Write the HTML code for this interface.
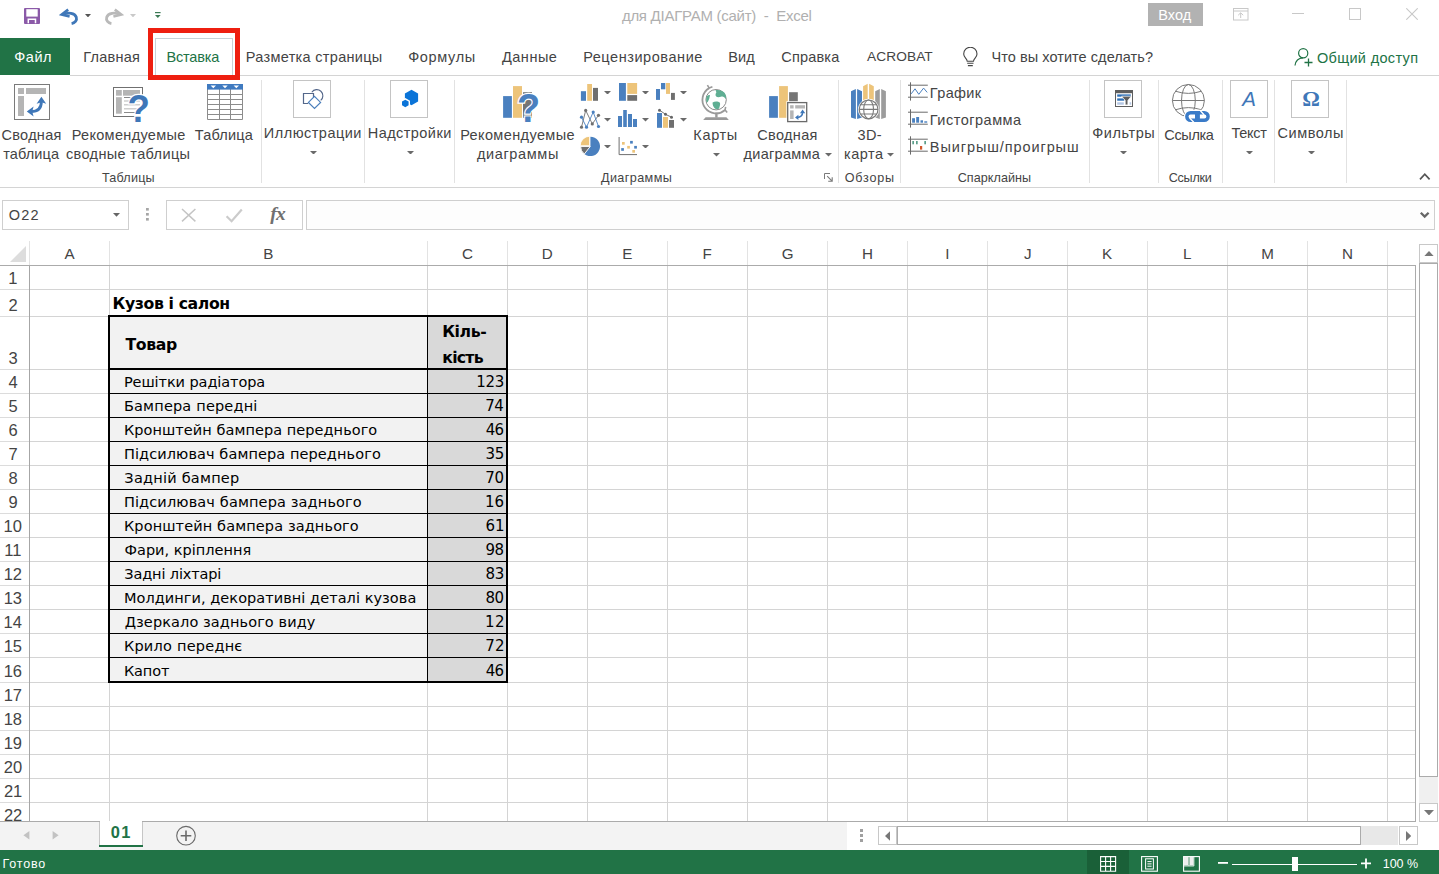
<!DOCTYPE html>
<html lang="ru"><head><meta charset="utf-8"><title>Excel</title>
<style>
html,body{margin:0;padding:0;background:#fff;}
body{width:1439px;height:874px;position:relative;overflow:hidden;font-family:"Liberation Sans",sans-serif;}
.a{position:absolute;display:block;}
.t{position:absolute;white-space:pre;line-height:20px;height:20px;}
</style></head><body>
<svg class="a" style="left:24px;top:8px;" width="16" height="16" viewBox="0 0 16 16"><rect x="0" y="0" width="16" height="16" rx="1" fill="#8b5aa8"/><rect x="2.3" y="1.2" width="11.4" height="7.4" fill="#fff"/><path d="M4.3 15.3V11.3H11.5V15.3" fill="none" stroke="#fff" stroke-width="1.5"/></svg>
<svg class="a" style="left:59px;top:7px;" width="21" height="18" viewBox="0 0 21 18"><path d="M9.2 2.6L2.6 7.6L10.6 9.6" fill="none" stroke="#3f77b8" stroke-width="2.6" stroke-linejoin="miter"/><path d="M4.2 7.5C9 5.2 15.8 5.6 17.3 10.2C18.3 13.4 15.8 16 12.6 16.6" fill="none" stroke="#3f77b8" stroke-width="2.8"/></svg>
<svg class="a" style="left:85px;top:14px;" width="6" height="3.4" viewBox="0 0 6 3.4"><path d="M0 0H6L3 3.4Z" fill="#555"/></svg>
<svg class="a" style="left:103px;top:7px;" width="21" height="18" viewBox="0 0 21 18"><g transform="translate(21,0) scale(-1,1)"><path d="M9.2 2.6L2.6 7.6L10.6 9.6" fill="none" stroke="#b9b9b9" stroke-width="2.6"/><path d="M4.2 7.5C9 5.2 15.8 5.6 17.3 10.2C18.3 13.4 15.8 16 12.6 16.6" fill="none" stroke="#b9b9b9" stroke-width="2.8"/></g></svg>
<svg class="a" style="left:130px;top:14px;" width="6" height="3.4" viewBox="0 0 6 3.4"><path d="M0 0H6L3 3.4Z" fill="#c9c9c9"/></svg>
<svg class="a" style="left:155px;top:12px;" width="6" height="6" viewBox="0 0 6 6"><rect x="0" y="0" width="5.6" height="1.2" fill="#3c7a55"/><path d="M0 3H5.6L2.8 5.9Z" fill="#3c7a55"/></svg>
<svg class="a" style="left:1233px;top:8px;" width="16" height="13" viewBox="0 0 16 13"><rect x="0.5" y="0.5" width="14.5" height="11.5" fill="none" stroke="#c8c8c8"/><path d="M0.5 3H15M7.7 10V5M5.2 7.2L7.7 4.8L10.2 7.2" fill="none" stroke="#c8c8c8"/></svg>
<svg class="a" style="left:1292px;top:13px;" width="12" height="1" viewBox="0 0 12 1"><rect width="12" height="1" fill="#c8c8c8"/></svg>
<svg class="a" style="left:1349px;top:8px;" width="12" height="12" viewBox="0 0 12 12"><rect x="0.5" y="0.5" width="11" height="11" fill="none" stroke="#c8c8c8"/></svg>
<svg class="a" style="left:1406px;top:8px;" width="12" height="12" viewBox="0 0 12 12"><path d="M0.3 0.3L11.7 11.7M11.7 0.3L0.3 11.7" stroke="#c8c8c8" stroke-width="1.1"/></svg>
<svg class="a" style="left:962px;top:47px;" width="17" height="21" viewBox="0 0 17 21"><path d="M5.2 14.2C5 11.5 1.7 10.3 1.7 6.9A6.6 6.6 0 0 1 15 6.9C15 10.3 11.7 11.5 11.5 14.2Z" fill="none" stroke="#444" stroke-width="1.1"/><path d="M5.2 16.3H11.5M5.9 18.6H10.8" stroke="#444" stroke-width="1.1"/></svg>
<svg class="a" style="left:1294px;top:47px;" width="20" height="20" viewBox="0 0 20 20"><circle cx="9.2" cy="6.2" r="4.6" fill="none" stroke="#217346" stroke-width="1.2"/><path d="M1 18.5C1.6 13.5 4.6 11 9 10.8" fill="none" stroke="#217346" stroke-width="1.2"/><path d="M14.5 11.5V19.5M10.5 15.5H18.5" stroke="#217346" stroke-width="1.3"/></svg>
<span class="t" style="left:621.92px;top:5.80px;font-size:15px;letter-spacing:-0.272px;color:#b0b0b0;">для ДІАГРАМ (сайт)  -  Excel</span>
<div class="a" style="left:1148px;top:3px;width:55px;height:23px;background:#b2b2b2;"></div>
<span class="t" style="left:1158.34px;top:4.98px;font-size:14.5px;letter-spacing:0.012px;color:#ffffff;">Вход</span>
<div class="a" style="left:0px;top:38px;width:70px;height:37px;background:#217346;"></div>
<div class="a" style="left:70px;top:75px;width:1369px;height:1px;background:#d4d4d4;"></div>
<div class="a" style="left:68px;top:75px;width:0px;height:0px;"></div>
<div class="a" style="left:155px;top:38px;width:78px;height:38px;background:#ffffff;border:1px solid #c9d2d6;border-bottom:none;box-sizing:border-box;"></div>
<span class="t" style="left:14.20px;top:46.58px;font-size:14.5px;letter-spacing:0.581px;color:#ffffff;">Файл</span>
<span class="t" style="left:83.34px;top:46.58px;font-size:14.5px;letter-spacing:0.238px;color:#444444;">Главная</span>
<span class="t" style="left:166.44px;top:46.58px;font-size:14.5px;letter-spacing:-0.180px;color:#217346;">Вставка</span>
<span class="t" style="left:245.84px;top:46.58px;font-size:14.5px;letter-spacing:0.305px;color:#444444;">Разметка страницы</span>
<span class="t" style="left:408.20px;top:46.58px;font-size:14.5px;letter-spacing:0.661px;color:#444444;">Формулы</span>
<span class="t" style="left:501.93px;top:46.58px;font-size:14.5px;letter-spacing:0.521px;color:#444444;">Данные</span>
<span class="t" style="left:583.14px;top:46.58px;font-size:14.5px;letter-spacing:0.562px;color:#444444;">Рецензирование</span>
<span class="t" style="left:728.34px;top:46.58px;font-size:14.5px;letter-spacing:0.066px;color:#444444;">Вид</span>
<span class="t" style="left:781.27px;top:46.58px;font-size:14.5px;letter-spacing:0.185px;color:#444444;">Справка</span>
<span class="t" style="left:867.00px;top:46.85px;font-size:13.7px;letter-spacing:0.094px;color:#444444;">ACROBAT</span>
<span class="t" style="left:991.41px;top:46.58px;font-size:14.5px;letter-spacing:0.062px;color:#444444;">Что вы хотите сделать?</span>
<span class="t" style="left:1316.95px;top:48.28px;font-size:14.5px;letter-spacing:0.330px;color:#217346;">Общий доступ</span>
<div class="a" style="left:148px;top:28px;width:92px;height:52px;border:5px solid #ee1f10;box-sizing:border-box;"></div>
<div class="a" style="left:0px;top:187px;width:1439px;height:1px;background:#d4d4d4;"></div>
<div class="a" style="left:261px;top:80px;width:1px;height:103px;background:#e2e2e2;"></div>
<div class="a" style="left:364px;top:80px;width:1px;height:103px;background:#e2e2e2;"></div>
<div class="a" style="left:454px;top:80px;width:1px;height:103px;background:#e2e2e2;"></div>
<div class="a" style="left:838px;top:80px;width:1px;height:103px;background:#e2e2e2;"></div>
<div class="a" style="left:900px;top:80px;width:1px;height:103px;background:#e2e2e2;"></div>
<div class="a" style="left:1089px;top:80px;width:1px;height:103px;background:#e2e2e2;"></div>
<div class="a" style="left:1158px;top:80px;width:1px;height:103px;background:#e2e2e2;"></div>
<div class="a" style="left:1222px;top:80px;width:1px;height:103px;background:#e2e2e2;"></div>
<div class="a" style="left:1274px;top:80px;width:1px;height:103px;background:#e2e2e2;"></div>
<div class="a" style="left:1346px;top:80px;width:1px;height:103px;background:#e2e2e2;"></div>
<span class="t" style="left:1.57px;top:124.58px;font-size:14.5px;letter-spacing:0.270px;color:#444;">Сводная</span>
<span class="t" style="left:3.18px;top:144.28px;font-size:14.5px;letter-spacing:0.108px;color:#444;">таблица</span>
<span class="t" style="left:71.64px;top:124.58px;font-size:14.5px;letter-spacing:0.331px;color:#444;">Рекомендуемые</span>
<span class="t" style="left:66.02px;top:144.28px;font-size:14.5px;letter-spacing:0.354px;color:#444;">сводные таблицы</span>
<span class="t" style="left:194.71px;top:124.58px;font-size:14.5px;letter-spacing:0.230px;color:#444;">Таблица</span>
<span class="t" style="left:263.84px;top:123.18px;font-size:14.5px;letter-spacing:0.487px;color:#444;">Иллюстрации</span>
<span class="t" style="left:367.84px;top:123.18px;font-size:14.5px;letter-spacing:0.430px;color:#444;">Надстройки</span>
<span class="t" style="left:460.14px;top:124.58px;font-size:14.5px;letter-spacing:0.390px;color:#444;">Рекомендуемые</span>
<span class="t" style="left:476.93px;top:144.28px;font-size:14.5px;letter-spacing:0.622px;color:#444;">диаграммы</span>
<span class="t" style="left:693.34px;top:124.58px;font-size:14.5px;letter-spacing:0.662px;color:#444;">Карты</span>
<span class="t" style="left:757.27px;top:124.58px;font-size:14.5px;letter-spacing:0.337px;color:#444;">Сводная</span>
<span class="t" style="left:743.53px;top:144.28px;font-size:14.5px;letter-spacing:0.297px;color:#444;">диаграмма</span>
<span class="t" style="left:857.49px;top:124.58px;font-size:14.5px;letter-spacing:0.371px;color:#444;">3D-</span>
<span class="t" style="left:844.06px;top:144.28px;font-size:14.5px;letter-spacing:0.474px;color:#444;">карта</span>
<span class="t" style="left:929.84px;top:82.78px;font-size:14.5px;letter-spacing:0.359px;color:#444;">График</span>
<span class="t" style="left:929.84px;top:109.68px;font-size:14.5px;letter-spacing:0.494px;color:#444;">Гистограмма</span>
<span class="t" style="left:929.84px;top:136.68px;font-size:14.5px;letter-spacing:0.909px;color:#444;">Выигрыш/проигрыш</span>
<span class="t" style="left:1092.20px;top:123.18px;font-size:14.5px;letter-spacing:0.575px;color:#444;">Фильтры</span>
<span class="t" style="left:1164.28px;top:124.58px;font-size:14.5px;letter-spacing:-0.335px;color:#444;">Ссылка</span>
<span class="t" style="left:1231.41px;top:123.18px;font-size:14.5px;letter-spacing:-0.233px;color:#444;">Текст</span>
<span class="t" style="left:1277.58px;top:123.18px;font-size:14.5px;letter-spacing:0.538px;color:#444;">Символы</span>
<span class="t" style="left:101.95px;top:167.83px;font-size:12.6px;letter-spacing:0.211px;color:#444;">Таблицы</span>
<span class="t" style="left:600.94px;top:167.83px;font-size:12.6px;letter-spacing:0.418px;color:#444;">Диаграммы</span>
<span class="t" style="left:844.73px;top:167.83px;font-size:12.6px;letter-spacing:0.793px;color:#444;">Обзоры</span>
<span class="t" style="left:957.67px;top:167.83px;font-size:12.6px;letter-spacing:0.055px;color:#444;">Спарклайны</span>
<span class="t" style="left:1168.67px;top:167.83px;font-size:12.6px;letter-spacing:-0.228px;color:#444;">Ссылки</span>
<div class="a" style="left:293px;top:80px;width:38px;height:38px;background:#fff;border:1px solid #c4c4c4;box-sizing:border-box;"></div>
<div class="a" style="left:390px;top:80px;width:38px;height:38px;background:#fff;border:1px solid #c4c4c4;box-sizing:border-box;"></div>
<div class="a" style="left:1104px;top:80px;width:38px;height:38px;background:#fff;border:1px solid #c4c4c4;box-sizing:border-box;"></div>
<div class="a" style="left:1230px;top:80px;width:38px;height:38px;background:#fff;border:1px solid #c4c4c4;box-sizing:border-box;"></div>
<div class="a" style="left:1291px;top:80px;width:38px;height:38px;background:#fff;border:1px solid #c4c4c4;box-sizing:border-box;"></div>
<svg class="a" style="left:14px;top:84px;" width="36" height="36" viewBox="0 0 36 36"><rect x="0.5" y="0.5" width="35" height="35" fill="#fff" stroke="#7a7a7a"/><rect x="4" y="4" width="6" height="6" fill="#b5b5b5"/><rect x="12" y="4" width="20" height="6" fill="#b5b5b5"/><rect x="4" y="12" width="6" height="20" fill="#b5b5b5"/><path d="M17 27.6C23.5 27.6 27.4 24.5 27.4 17.5" fill="none" stroke="#3f77b8" stroke-width="2.8"/><path d="M12.8 27.6L19.6 22.6L18.2 27.6L19.6 32.4Z" fill="#3f77b8"/><path d="M27.4 12.8L32.2 19.8L27.4 18.2L22.6 19.8Z" fill="#3f77b8"/></svg>
<svg class="a" style="left:113px;top:87px;" width="36" height="36" viewBox="0 0 36 36"><rect x="0.5" y="0.5" width="29" height="29" fill="#fff" stroke="#707070"/><rect x="3" y="3" width="5.8" height="5.7" fill="#b5b5b5"/><rect x="10" y="3" width="17" height="5.7" fill="#b5b5b5"/><rect x="3" y="10.2" width="5.8" height="16.5" fill="#b5b5b5"/><path d="M11 10.5H27M11 25.5H27" stroke="#8a8a8a" stroke-width="1"/><path d="M11 14H27M11 17.8H27M11 21.8H27" stroke="#cfcfcf" stroke-width="1.6"/><rect x="27" y="11.5" width="4" height="19.5" fill="#fff"/><rect x="23.5" y="27" width="7" height="4" fill="#fff"/><text x="14.4" y="35" font-family="Liberation Sans,sans-serif" font-weight="700" font-size="39.4" fill="#3f77b8" stroke="#fff" stroke-width="2.4" paint-order="stroke" transform="translate(14.4 0) scale(0.93 1) translate(-14.4 0)">?</text></svg>
<svg class="a" style="left:207px;top:84px;" width="36" height="36" viewBox="0 0 36 36"><rect x="0" y="0" width="36" height="36" fill="#fff"/><path d="M0.5 5V35.5H35.5V5M12.5 5V35.5M23.5 5V35.5M0 10.5H36M0 15.5H36M0 20.5H36M0 25.5H36M0 30.5H36" fill="none" stroke="#8c8c8c"/><rect x="0" y="0" width="36" height="5.6" fill="#3f7ac0"/><path d="M3.6 1.4H9L6.3 4.2ZM15.3 1.4H20.7L18 4.2ZM26.6 1.4H32L29.3 4.2Z" fill="#fff"/></svg>
<svg class="a" style="left:293px;top:80px;" width="38" height="38" viewBox="0 0 38 38"><path d="M15.2 23.5H10.5V13.5H20.5V17" fill="none" stroke="#54678a" stroke-width="1.2"/><path d="M18.8 12.2A6.1 6.1 0 1 1 27.7 20.4" fill="none" stroke="#54678a" stroke-width="1.1"/><path d="M21.5 16.3L27.6 22.4L21.5 28.5L15.4 22.4Z" fill="#fff" stroke="#4a7ebb" stroke-width="1.2"/></svg>
<svg class="a" style="left:390px;top:80px;" width="38" height="38" viewBox="0 0 38 38"><path d="M21.5 9.8L28.1 13.6V21.4L21.5 25.2L14.9 21.4V13.6Z" fill="#0b74d8"/><path d="M15.3 18L20 20.7V26.1L15.3 28.8L10.6 26.1V20.7Z" fill="#fff"/><path d="M15.3 19.7L18.6 21.6V25.3L15.3 27.2L12 25.3V21.6Z" fill="#0b74d8"/></svg>
<svg class="a" style="left:500px;top:84px;" width="42" height="42" viewBox="0 0 42 42"><rect x="3.1" y="12.1" width="8.8" height="21.7" fill="#4a80bf"/><rect x="13" y="2.1" width="9" height="31.7" fill="#edc47a"/><rect x="23" y="8.2" width="9" height="25.6" fill="#757575"/><text x="17" y="38" font-family="Liberation Sans,sans-serif" font-weight="700" font-size="39.8" fill="#4a80bf" stroke="#fff" stroke-width="2.4" paint-order="stroke" transform="translate(17 0) scale(0.95 1) translate(-17 0)">?</text></svg>
<svg class="a" style="left:578px;top:82px;" width="24" height="22" viewBox="0 0 24 22"><rect x="2.9" y="9.2" width="5.1" height="9.6" fill="#4a80bf"/><rect x="9.2" y="2.0" width="4.8" height="16.8" fill="#edc47a"/><rect x="15.0" y="5.9" width="5.0" height="12.9" fill="#6f6f6f"/></svg>
<svg class="a" style="left:617px;top:82px;" width="24" height="22" viewBox="0 0 24 22"><rect x="2.0" y="1.0" width="6.9" height="17.8" fill="#4a80bf"/><rect x="10.3" y="1.0" width="9.8" height="10.9" fill="#edc47a"/><rect x="10.3" y="13.1" width="9.8" height="5.7" fill="#6f6f6f"/></svg>
<svg class="a" style="left:654px;top:82px;" width="24" height="22" viewBox="0 0 24 22"><rect x="2.0" y="7.0" width="4.0" height="10.9" fill="#4a80bf"/><rect x="7.0" y="1.0" width="4.3" height="6.3" fill="#4a80bf"/><rect x="12.0" y="1.0" width="4.0" height="10.9" fill="#edc47a"/><rect x="17.0" y="10.9" width="3.9" height="7.0" fill="#6f6f6f"/></svg>
<svg class="a" style="left:578px;top:107px;" width="24" height="23" viewBox="0 0 24 23"><polyline points="3.5,20.2 7.7,3.4 14.3,16.9 20.5,8.3" fill="none" stroke="#6f6f6f" stroke-width="0.9"/><polyline points="3.5,10.2 8.5,20.2 15.2,5.1 20.5,19.5" fill="none" stroke="#4a80bf" stroke-width="0.9"/><circle cx="3.5" cy="20.2" r="1.6" fill="#6f6f6f"/><circle cx="7.7" cy="3.4" r="1.6" fill="#6f6f6f"/><circle cx="14.3" cy="16.9" r="1.6" fill="#6f6f6f"/><circle cx="20.5" cy="8.3" r="1.6" fill="#6f6f6f"/><circle cx="3.5" cy="10.2" r="1.6" fill="#4a80bf"/><circle cx="8.5" cy="20.2" r="1.6" fill="#4a80bf"/><circle cx="15.2" cy="5.1" r="1.6" fill="#4a80bf"/><circle cx="20.5" cy="19.5" r="1.6" fill="#4a80bf"/></svg>
<svg class="a" style="left:617px;top:107px;" width="24" height="23" viewBox="0 0 24 23"><rect x="1.0" y="9.0" width="4.0" height="11.0" fill="#4a80bf"/><rect x="6.2" y="3.0" width="3.6" height="17.0" fill="#4a80bf"/><rect x="11.0" y="7.0" width="4.0" height="13.0" fill="#4a80bf"/><rect x="16.0" y="12.0" width="4.0" height="8.0" fill="#4a80bf"/></svg>
<svg class="a" style="left:654px;top:107px;" width="24" height="23" viewBox="0 0 24 23"><rect x="3.0" y="6.0" width="5.0" height="14.8" fill="#4a80bf"/><rect x="9.0" y="10.0" width="5.0" height="10.8" fill="#edc47a"/><rect x="15.0" y="13.0" width="5.0" height="7.8" fill="#6f6f6f"/><polyline points="5.5,3.2 11.5,7.3 17.5,10.2" fill="none" stroke="#666" stroke-width="0.9"/><circle cx="5.5" cy="3.2" r="1.5" fill="#666"/><circle cx="11.5" cy="7.3" r="1.5" fill="#666"/><circle cx="17.5" cy="10.2" r="1.5" fill="#666"/></svg>
<svg class="a" style="left:578px;top:134px;" width="24" height="24" viewBox="0 0 24 24"><path d="M12.3 12.4L12.30 2.70A9.7 9.7 0 1 1 6.33 20.04Z" fill="#4a80bf"/><path d="M12.3 12.4L6.33 20.04A9.7 9.7 0 0 1 2.60 12.40Z" fill="#6f6f6f" stroke="#fff" stroke-width="0.9"/><path d="M11.700000000000001 11.8L2.100000000000002 11.8A9.7 9.7 0 0 1 11.700000000000001 2.2000000000000015Z" fill="#edc47a" stroke="#fff" stroke-width="0.9"/></svg>
<svg class="a" style="left:617px;top:135px;" width="24" height="22" viewBox="0 0 24 22"><path d="M2.1 2V19.6H20" fill="none" stroke="#6f6f6f" stroke-width="1"/><rect x="5.0" y="7.0" width="2.7" height="2.7" fill="#edc47a"/><rect x="13.1" y="5.9" width="2.7" height="2.7" fill="#4a80bf"/><rect x="10.2" y="10.9" width="2.7" height="2.7" fill="#edc47a"/><rect x="17.2" y="10.9" width="2.7" height="2.7" fill="#4a80bf"/><rect x="4.2" y="13.1" width="2.7" height="2.7" fill="#4a80bf"/><rect x="15.3" y="15.0" width="2.7" height="2.7" fill="#edc47a"/></svg>
<svg class="a" style="left:603.5px;top:90.9px;" width="7" height="3.6" viewBox="0 0 7 3.6"><path d="M0 0H7L3.5 3.6Z" fill="#6a6a6a"/></svg>
<svg class="a" style="left:641.5px;top:90.9px;" width="7" height="3.6" viewBox="0 0 7 3.6"><path d="M0 0H7L3.5 3.6Z" fill="#6a6a6a"/></svg>
<svg class="a" style="left:679.5px;top:90.9px;" width="7" height="3.6" viewBox="0 0 7 3.6"><path d="M0 0H7L3.5 3.6Z" fill="#6a6a6a"/></svg>
<svg class="a" style="left:603.5px;top:118.1px;" width="7" height="3.6" viewBox="0 0 7 3.6"><path d="M0 0H7L3.5 3.6Z" fill="#6a6a6a"/></svg>
<svg class="a" style="left:641.5px;top:118.1px;" width="7" height="3.6" viewBox="0 0 7 3.6"><path d="M0 0H7L3.5 3.6Z" fill="#6a6a6a"/></svg>
<svg class="a" style="left:679.5px;top:118.1px;" width="7" height="3.6" viewBox="0 0 7 3.6"><path d="M0 0H7L3.5 3.6Z" fill="#6a6a6a"/></svg>
<svg class="a" style="left:603.5px;top:144.9px;" width="7" height="3.6" viewBox="0 0 7 3.6"><path d="M0 0H7L3.5 3.6Z" fill="#6a6a6a"/></svg>
<svg class="a" style="left:641.5px;top:144.9px;" width="7" height="3.6" viewBox="0 0 7 3.6"><path d="M0 0H7L3.5 3.6Z" fill="#6a6a6a"/></svg>
<svg class="a" style="left:700px;top:82px;" width="32" height="40" viewBox="0 0 32 40"><circle cx="16.1" cy="17.7" r="10.2" fill="#fff" stroke="#8a8a8a" stroke-width="1"/><path d="M15.5 8.3C18 7.4 22 8 24.3 10.6C25.8 12.4 26.3 14.8 25.8 17C24.6 15.2 23.2 14.2 21.6 14.6C19.6 15.2 17.6 15.8 16.2 14.6C15 13.4 15.6 11.4 16.4 10.2Z" fill="#5fae93"/><path d="M6.8 14.2C8 13 9.6 12.6 10 13.4C9.6 15.6 9 17.6 8 19.4C7.4 20.4 6.6 20.6 6.3 19.6C6 17.8 6.2 15.8 6.8 14.2Z" fill="#5fae93"/><path d="M12.6 20.4C14.8 19 18.4 19.2 19.8 20.6C20.6 22 19.8 24 19.4 25.6C19.2 26.8 18.2 27.4 16.8 27.2C14.2 26.6 12.4 23.6 12.6 20.4Z" fill="#5fae93"/><path d="M9.2 6.1A13.6 13.6 0 1 0 25.1 28" fill="none" stroke="#9a9a9a" stroke-width="1.8"/><path d="M7.4 3.2L9.2 6.1L12.4 4.8M25.6 24.8L25.1 28L27.2 30.6" fill="none" stroke="#9a9a9a" stroke-width="1.6"/><rect x="15.2" y="30.6" width="2.4" height="5" fill="#9a9a9a"/><path d="M5.6 35.2H26.4L28.8 37.9H3.2Z" fill="#9a9a9a"/></svg>
<svg class="a" style="left:712.5px;top:153.0px;" width="7" height="3.6" viewBox="0 0 7 3.6"><path d="M0 0H7L3.5 3.6Z" fill="#6a6a6a"/></svg>
<svg class="a" style="left:766px;top:84px;" width="44" height="40" viewBox="0 0 44 40"><rect x="3.1" y="12.1" width="8.8" height="21.7" fill="#4a80bf"/><rect x="13.1" y="2.1" width="8.8" height="31.7" fill="#edc47a"/><rect x="23.1" y="8.2" width="8.7" height="12" fill="#757575"/><rect x="20.4" y="17.2" width="21.4" height="21.4" fill="#fff"/><rect x="21.7" y="18.6" width="19" height="19" fill="#fff" stroke="#6a6a6a" stroke-width="1.3"/><rect x="24.1" y="21.2" width="3.5" height="3.3" fill="#b5b5b5"/><rect x="29.2" y="21.2" width="9.8" height="3.3" fill="#b5b5b5"/><rect x="24.1" y="26.4" width="3.5" height="8.6" fill="#b5b5b5"/><path d="M31 33.4C34.6 33.4 36.6 31.6 36.6 28" fill="none" stroke="#3f77b8" stroke-width="1.5"/><path d="M29 33.4L32.4 30.8V36ZM36.6 25.6L39.2 29.2H34Z" fill="#3f77b8"/></svg>
<svg class="a" style="left:824.5px;top:153.0px;" width="7" height="3.6" viewBox="0 0 7 3.6"><path d="M0 0H7L3.5 3.6Z" fill="#6a6a6a"/></svg>
<svg class="a" style="left:848px;top:82px;" width="42" height="40" viewBox="0 0 42 40"><path d="M3.0 9.2L7.9 7.0V36.9L3.0 35.6Z" fill="#4a80bf"/><path d="M9.1 7.0L14.0 9.2V35.6L9.1 36.9Z" fill="#4a80bf"/><path d="M15.1 4.2L19.7 1.8V28.0L15.1 28.0Z" fill="#edc47a"/><path d="M21.1 1.8L25.8 4.2V28.0L21.1 28.0Z" fill="#edc47a"/><path d="M27.2 9.2L31.8 7.0V36.9L27.2 35.6Z" fill="#9c9c9c"/><path d="M33.2 7.0L37.9 9.2V35.6L33.2 36.9Z" fill="#9c9c9c"/><circle cx="20.600000000000023" cy="27.400000000000006" r="10.6" fill="#fff"/><circle cx="20.600000000000023" cy="27.400000000000006" r="9.4" fill="#fff" stroke="#7a7a7a" stroke-width="1.2"/><ellipse cx="20.600000000000023" cy="27.400000000000006" rx="4.9" ry="9.4" fill="none" stroke="#7a7a7a" stroke-width="1.1"/><path d="M11.200000000000022 27.400000000000006H30.00000000000002M12.400000000000023 22.800000000000004H28.800000000000022M12.400000000000023 32.00000000000001H28.800000000000022" stroke="#7a7a7a" stroke-width="1.1"/></svg>
<svg class="a" style="left:886.5px;top:153.0px;" width="7" height="3.6" viewBox="0 0 7 3.6"><path d="M0 0H7L3.5 3.6Z" fill="#6a6a6a"/></svg>
<svg class="a" style="left:908px;top:82px;" width="20" height="19" viewBox="0 0 20 19"><path d="M2.5 0.3V18.6M0 3.2H19.8M0 15.2H19.8" fill="none" stroke="#6a6a6a" stroke-width="1"/><polyline points="3.1,11.9 7,6.8 10.8,12.3 15.6,6.1 19.2,10.4" fill="none" stroke="#4a80bf" stroke-width="1"/></svg>
<svg class="a" style="left:908px;top:109px;" width="20" height="19" viewBox="0 0 20 19"><path d="M2.5 0.3V18.6M0 3.2H19.8M0 15.2H19.8" fill="none" stroke="#6a6a6a" stroke-width="1"/><rect x="4.1" y="9.2" width="2.9" height="4.5" fill="#4a80bf"/><rect x="8.2" y="8" width="2.9" height="5.7" fill="#4a80bf"/><rect x="12.5" y="11.3" width="2.5" height="2.4" fill="#4a80bf"/><rect x="16.3" y="12.3" width="2.9" height="1.4" fill="#4a80bf"/></svg>
<svg class="a" style="left:908px;top:136px;" width="20" height="19" viewBox="0 0 20 19"><path d="M2.5 0.3V18.6M0 3.2H19.8M0 15.2H19.8" fill="none" stroke="#6a6a6a" stroke-width="1"/><rect x="4.3" y="5" width="1.7" height="3.3" fill="#5c9e8a"/><rect x="8" y="5" width="1.7" height="3.3" fill="#5c9e8a"/><rect x="16.3" y="5" width="1.7" height="3.3" fill="#5c9e8a"/><rect x="12" y="10" width="2.2" height="3.6" fill="#d2562a"/></svg>
<svg class="a" style="left:1104px;top:80px;" width="38" height="38" viewBox="0 0 38 38"><rect x="11.5" y="10.5" width="17" height="16" fill="#fff" stroke="#5e5e5e" stroke-width="1"/><rect x="11" y="10" width="18" height="3.2" fill="#5e5e5e"/><rect x="13.2" y="14.4" width="13.6" height="2.3" fill="#2e6fb6"/><rect x="13.2" y="18.4" width="7" height="2.3" fill="#2e6fb6"/><rect x="13.2" y="22.3" width="6.6" height="2.4" fill="#b4c7e4"/><rect x="25.6" y="22.3" width="1.6" height="2.4" fill="#b4c7e4"/><path d="M17.6 16.2H27.4L23.9 20.4V24.9H21.2V20.4Z" fill="#5e5e5e" stroke="#fff" stroke-width="0.7"/></svg>
<svg class="a" style="left:1162px;top:82px;" width="52" height="42" viewBox="0 0 52 42"><circle cx="26.4" cy="18.5" r="16" fill="#fff" stroke="#7a7a7a" stroke-width="1"/><ellipse cx="26.4" cy="18.5" rx="6.9" ry="16" fill="none" stroke="#7a7a7a" stroke-width="1"/><path d="M10.399999999999999 18.5H42.4M13.399999999999999 9.2Q26.4 13.6 39.4 9.2M13.399999999999999 27.8Q26.4 23.4 39.4 27.8" fill="none" stroke="#7a7a7a" stroke-width="1"/><rect x="23.1" y="29" width="24.7" height="11" rx="5.5" fill="#fff" stroke="#fff" stroke-width="2.4"/><rect x="24.8" y="30.7" width="21.3" height="7.6" rx="3.8" fill="none" stroke="#3a7bc8" stroke-width="3.4"/><rect x="33" y="30" width="4.9" height="9" fill="#3a7bc8"/><path d="M27.6 36L31.8 40.2M38.4 28.8L42.2 33" stroke="#fff" stroke-width="1.3"/></svg>
<svg class="a" style="left:1229px;top:80px;" width="38" height="38" viewBox="0 0 38 38"><text x="13.2" y="25.6" font-family="Liberation Sans,sans-serif" font-style="italic" font-size="20.5" fill="#3f77b8">A</text></svg>
<svg class="a" style="left:1291px;top:80px;" width="38" height="38" viewBox="0 0 38 38"><text x="11.3" y="25.5" font-family="Liberation Serif,serif" font-weight="700" font-size="22" fill="#3f77b8">Ω</text></svg>
<svg class="a" style="left:309.5px;top:150.7px;" width="7" height="3.6" viewBox="0 0 7 3.6"><path d="M0 0H7L3.5 3.6Z" fill="#6a6a6a"/></svg>
<svg class="a" style="left:406.8px;top:150.7px;" width="7" height="3.6" viewBox="0 0 7 3.6"><path d="M0 0H7L3.5 3.6Z" fill="#6a6a6a"/></svg>
<svg class="a" style="left:1120.0px;top:150.7px;" width="7" height="3.6" viewBox="0 0 7 3.6"><path d="M0 0H7L3.5 3.6Z" fill="#6a6a6a"/></svg>
<svg class="a" style="left:1245.5px;top:150.7px;" width="7" height="3.6" viewBox="0 0 7 3.6"><path d="M0 0H7L3.5 3.6Z" fill="#6a6a6a"/></svg>
<svg class="a" style="left:1307.5px;top:150.7px;" width="7" height="3.6" viewBox="0 0 7 3.6"><path d="M0 0H7L3.5 3.6Z" fill="#6a6a6a"/></svg>
<svg class="a" style="left:824px;top:173px;" width="9" height="9" viewBox="0 0 9 9"><path d="M0.5 6V0.5H6" fill="none" stroke="#7a7a7a" stroke-width="1"/><path d="M3.2 3.2L7.6 7.6M8.2 4.2V8.2H4.2" fill="none" stroke="#7a7a7a" stroke-width="1.1"/></svg>
<svg class="a" style="left:1419px;top:172px;" width="12" height="9" viewBox="0 0 12 9"><path d="M1 7.4L5.8 2.2L10.6 7.4" fill="none" stroke="#555" stroke-width="1.7"/></svg>
<div class="a" style="left:2px;top:200px;width:127px;height:30px;background:#fff;border:1px solid #cfcfcf;box-sizing:border-box;"></div>
<div class="a" style="left:166px;top:200px;width:137px;height:30px;background:#fff;border:1px solid #cfcfcf;box-sizing:border-box;"></div>
<div class="a" style="left:306px;top:200px;width:1129px;height:30px;background:#fdfdfd;border:1px solid #cfcfcf;box-sizing:border-box;"></div>
<span class="t" style="left:8.65px;top:205.48px;font-size:14.5px;letter-spacing:1.300px;color:#444444;">O22</span>
<svg class="a" style="left:113px;top:213px;" width="7" height="4" viewBox="0 0 7 4"><path d="M0 0H7L3.5 3.8Z" fill="#666"/></svg>
<svg class="a" style="left:146px;top:208.4px;" width="3" height="3" viewBox="0 0 3 3"><rect width="2.8" height="2.6" fill="#a6a6a6"/></svg>
<svg class="a" style="left:146px;top:213.2px;" width="3" height="3" viewBox="0 0 3 3"><rect width="2.8" height="2.6" fill="#a6a6a6"/></svg>
<svg class="a" style="left:146px;top:218px;" width="3" height="3" viewBox="0 0 3 3"><rect width="2.8" height="2.6" fill="#a6a6a6"/></svg>
<svg class="a" style="left:181px;top:208px;" width="16" height="14" viewBox="0 0 16 14"><path d="M1 1L14.4 13.4M14.4 1L1 13.4" stroke="#c4c4c4" stroke-width="1.5"/></svg>
<svg class="a" style="left:225px;top:208px;" width="18" height="15" viewBox="0 0 18 15"><path d="M1.6 8.2L6.6 13.2L16.8 1.6" fill="none" stroke="#cbcbcb" stroke-width="2.2"/></svg>
<svg class="a" style="left:266px;top:202px;" width="24" height="26" viewBox="0 0 24 26"><text x="4.2" y="17.6" font-family="Liberation Serif,serif" font-style="italic" font-weight="700" font-size="19.5" fill="#707070" letter-spacing="-0.6">fx</text></svg>
<svg class="a" style="left:1419px;top:211px;" width="12" height="8" viewBox="0 0 12 8"><path d="M1.8 1.8L5.7 5.6L9.6 1.8" fill="none" stroke="#666" stroke-width="2.3"/></svg>
<div class="a" style="left:29px;top:241px;width:1px;height:24px;background:#e3e3e3;"></div>
<div class="a" style="left:109px;top:241px;width:1px;height:24px;background:#e3e3e3;"></div>
<div class="a" style="left:427px;top:241px;width:1px;height:24px;background:#e3e3e3;"></div>
<div class="a" style="left:507px;top:241px;width:1px;height:24px;background:#e3e3e3;"></div>
<div class="a" style="left:587px;top:241px;width:1px;height:24px;background:#e3e3e3;"></div>
<div class="a" style="left:667px;top:241px;width:1px;height:24px;background:#e3e3e3;"></div>
<div class="a" style="left:747px;top:241px;width:1px;height:24px;background:#e3e3e3;"></div>
<div class="a" style="left:827px;top:241px;width:1px;height:24px;background:#e3e3e3;"></div>
<div class="a" style="left:907px;top:241px;width:1px;height:24px;background:#e3e3e3;"></div>
<div class="a" style="left:987px;top:241px;width:1px;height:24px;background:#e3e3e3;"></div>
<div class="a" style="left:1067px;top:241px;width:1px;height:24px;background:#e3e3e3;"></div>
<div class="a" style="left:1147px;top:241px;width:1px;height:24px;background:#e3e3e3;"></div>
<div class="a" style="left:1227px;top:241px;width:1px;height:24px;background:#e3e3e3;"></div>
<div class="a" style="left:1307px;top:241px;width:1px;height:24px;background:#e3e3e3;"></div>
<div class="a" style="left:1387px;top:241px;width:1px;height:24px;background:#e3e3e3;"></div>
<div class="a" style="left:109px;top:266px;width:1px;height:555px;background:#d4d4d4;"></div>
<div class="a" style="left:427px;top:266px;width:1px;height:555px;background:#d4d4d4;"></div>
<div class="a" style="left:507px;top:266px;width:1px;height:555px;background:#d4d4d4;"></div>
<div class="a" style="left:587px;top:266px;width:1px;height:555px;background:#d4d4d4;"></div>
<div class="a" style="left:667px;top:266px;width:1px;height:555px;background:#d4d4d4;"></div>
<div class="a" style="left:747px;top:266px;width:1px;height:555px;background:#d4d4d4;"></div>
<div class="a" style="left:827px;top:266px;width:1px;height:555px;background:#d4d4d4;"></div>
<div class="a" style="left:907px;top:266px;width:1px;height:555px;background:#d4d4d4;"></div>
<div class="a" style="left:987px;top:266px;width:1px;height:555px;background:#d4d4d4;"></div>
<div class="a" style="left:1067px;top:266px;width:1px;height:555px;background:#d4d4d4;"></div>
<div class="a" style="left:1147px;top:266px;width:1px;height:555px;background:#d4d4d4;"></div>
<div class="a" style="left:1227px;top:266px;width:1px;height:555px;background:#d4d4d4;"></div>
<div class="a" style="left:1307px;top:266px;width:1px;height:555px;background:#d4d4d4;"></div>
<div class="a" style="left:1387px;top:266px;width:1px;height:555px;background:#d4d4d4;"></div>
<div class="a" style="left:30px;top:289px;width:1386px;height:1px;background:#d4d4d4;"></div>
<div class="a" style="left:0px;top:289px;width:29px;height:1px;background:#dcdcdc;"></div>
<div class="a" style="left:30px;top:316px;width:1386px;height:1px;background:#d4d4d4;"></div>
<div class="a" style="left:0px;top:316px;width:29px;height:1px;background:#dcdcdc;"></div>
<div class="a" style="left:30px;top:369px;width:1386px;height:1px;background:#d4d4d4;"></div>
<div class="a" style="left:0px;top:369px;width:29px;height:1px;background:#dcdcdc;"></div>
<div class="a" style="left:30px;top:393px;width:1386px;height:1px;background:#d4d4d4;"></div>
<div class="a" style="left:0px;top:393px;width:29px;height:1px;background:#dcdcdc;"></div>
<div class="a" style="left:30px;top:417px;width:1386px;height:1px;background:#d4d4d4;"></div>
<div class="a" style="left:0px;top:417px;width:29px;height:1px;background:#dcdcdc;"></div>
<div class="a" style="left:30px;top:441px;width:1386px;height:1px;background:#d4d4d4;"></div>
<div class="a" style="left:0px;top:441px;width:29px;height:1px;background:#dcdcdc;"></div>
<div class="a" style="left:30px;top:465px;width:1386px;height:1px;background:#d4d4d4;"></div>
<div class="a" style="left:0px;top:465px;width:29px;height:1px;background:#dcdcdc;"></div>
<div class="a" style="left:30px;top:489px;width:1386px;height:1px;background:#d4d4d4;"></div>
<div class="a" style="left:0px;top:489px;width:29px;height:1px;background:#dcdcdc;"></div>
<div class="a" style="left:30px;top:513px;width:1386px;height:1px;background:#d4d4d4;"></div>
<div class="a" style="left:0px;top:513px;width:29px;height:1px;background:#dcdcdc;"></div>
<div class="a" style="left:30px;top:537px;width:1386px;height:1px;background:#d4d4d4;"></div>
<div class="a" style="left:0px;top:537px;width:29px;height:1px;background:#dcdcdc;"></div>
<div class="a" style="left:30px;top:561px;width:1386px;height:1px;background:#d4d4d4;"></div>
<div class="a" style="left:0px;top:561px;width:29px;height:1px;background:#dcdcdc;"></div>
<div class="a" style="left:30px;top:585px;width:1386px;height:1px;background:#d4d4d4;"></div>
<div class="a" style="left:0px;top:585px;width:29px;height:1px;background:#dcdcdc;"></div>
<div class="a" style="left:30px;top:609px;width:1386px;height:1px;background:#d4d4d4;"></div>
<div class="a" style="left:0px;top:609px;width:29px;height:1px;background:#dcdcdc;"></div>
<div class="a" style="left:30px;top:633px;width:1386px;height:1px;background:#d4d4d4;"></div>
<div class="a" style="left:0px;top:633px;width:29px;height:1px;background:#dcdcdc;"></div>
<div class="a" style="left:30px;top:657px;width:1386px;height:1px;background:#d4d4d4;"></div>
<div class="a" style="left:0px;top:657px;width:29px;height:1px;background:#dcdcdc;"></div>
<div class="a" style="left:30px;top:682px;width:1386px;height:1px;background:#d4d4d4;"></div>
<div class="a" style="left:0px;top:682px;width:29px;height:1px;background:#dcdcdc;"></div>
<div class="a" style="left:30px;top:706px;width:1386px;height:1px;background:#d4d4d4;"></div>
<div class="a" style="left:0px;top:706px;width:29px;height:1px;background:#dcdcdc;"></div>
<div class="a" style="left:30px;top:730px;width:1386px;height:1px;background:#d4d4d4;"></div>
<div class="a" style="left:0px;top:730px;width:29px;height:1px;background:#dcdcdc;"></div>
<div class="a" style="left:30px;top:754px;width:1386px;height:1px;background:#d4d4d4;"></div>
<div class="a" style="left:0px;top:754px;width:29px;height:1px;background:#dcdcdc;"></div>
<div class="a" style="left:30px;top:778px;width:1386px;height:1px;background:#d4d4d4;"></div>
<div class="a" style="left:0px;top:778px;width:29px;height:1px;background:#dcdcdc;"></div>
<div class="a" style="left:30px;top:802px;width:1386px;height:1px;background:#d4d4d4;"></div>
<div class="a" style="left:0px;top:802px;width:29px;height:1px;background:#dcdcdc;"></div>
<div class="a" style="left:29px;top:266px;width:1px;height:555px;background:#a6a6a6;"></div>
<div class="a" style="left:0px;top:265px;width:1416px;height:1px;background:#ababab;"></div>
<div class="a" style="left:1415px;top:265px;width:1px;height:556px;background:#ababab;"></div>
<div class="a" style="left:0px;top:821px;width:1439px;height:1px;background:#ababab;"></div>
<svg class="a" style="left:10px;top:246px;" width="16" height="16" viewBox="0 0 16 16"><path d="M16 0V16H0Z" fill="#dddddd"/></svg>
<span class="t" style="left:64.45px;top:243.93px;font-size:15.2px;letter-spacing:0.000px;color:#444444;">A</span>
<span class="t" style="left:263.22px;top:243.93px;font-size:15.2px;letter-spacing:0.000px;color:#444444;">B</span>
<span class="t" style="left:461.91px;top:243.93px;font-size:15.2px;letter-spacing:0.000px;color:#444444;">C</span>
<span class="t" style="left:541.76px;top:243.93px;font-size:15.2px;letter-spacing:0.000px;color:#444444;">D</span>
<span class="t" style="left:622.14px;top:243.93px;font-size:15.2px;letter-spacing:0.000px;color:#444444;">E</span>
<span class="t" style="left:702.52px;top:243.93px;font-size:15.2px;letter-spacing:0.000px;color:#444444;">F</span>
<span class="t" style="left:781.76px;top:243.93px;font-size:15.2px;letter-spacing:0.000px;color:#444444;">G</span>
<span class="t" style="left:861.99px;top:243.93px;font-size:15.2px;letter-spacing:0.000px;color:#444444;">H</span>
<span class="t" style="left:945.37px;top:243.93px;font-size:15.2px;letter-spacing:0.000px;color:#444444;">I</span>
<span class="t" style="left:1024.12px;top:243.93px;font-size:15.2px;letter-spacing:0.000px;color:#444444;">J</span>
<span class="t" style="left:1101.88px;top:243.93px;font-size:15.2px;letter-spacing:0.000px;color:#444444;">K</span>
<span class="t" style="left:1182.90px;top:243.93px;font-size:15.2px;letter-spacing:0.000px;color:#444444;">L</span>
<span class="t" style="left:1261.15px;top:243.93px;font-size:15.2px;letter-spacing:0.000px;color:#444444;">M</span>
<span class="t" style="left:1341.99px;top:243.93px;font-size:15.2px;letter-spacing:0.000px;color:#444444;">N</span>
<span class="t" style="left:8.27px;top:268.08px;font-size:16.5px;letter-spacing:0.000px;color:#444444;">1</span>
<span class="t" style="left:8.48px;top:295.08px;font-size:16.5px;letter-spacing:0.000px;color:#444444;">2</span>
<span class="t" style="left:8.56px;top:348.08px;font-size:16.5px;letter-spacing:0.000px;color:#444444;">3</span>
<span class="t" style="left:8.56px;top:372.08px;font-size:16.5px;letter-spacing:0.000px;color:#444444;">4</span>
<span class="t" style="left:8.52px;top:396.08px;font-size:16.5px;letter-spacing:0.000px;color:#444444;">5</span>
<span class="t" style="left:8.44px;top:420.08px;font-size:16.5px;letter-spacing:0.000px;color:#444444;">6</span>
<span class="t" style="left:8.48px;top:444.08px;font-size:16.5px;letter-spacing:0.000px;color:#444444;">7</span>
<span class="t" style="left:8.52px;top:468.08px;font-size:16.5px;letter-spacing:0.000px;color:#444444;">8</span>
<span class="t" style="left:8.52px;top:492.08px;font-size:16.5px;letter-spacing:0.000px;color:#444444;">9</span>
<span class="t" style="left:3.61px;top:516.08px;font-size:16.5px;letter-spacing:0.000px;color:#444444;">10</span>
<span class="t" style="left:4.31px;top:540.08px;font-size:16.5px;letter-spacing:0.000px;color:#444444;">11</span>
<span class="t" style="left:3.69px;top:564.08px;font-size:16.5px;letter-spacing:0.000px;color:#444444;">12</span>
<span class="t" style="left:3.65px;top:588.08px;font-size:16.5px;letter-spacing:0.000px;color:#444444;">13</span>
<span class="t" style="left:3.53px;top:612.08px;font-size:16.5px;letter-spacing:0.000px;color:#444444;">14</span>
<span class="t" style="left:3.65px;top:636.08px;font-size:16.5px;letter-spacing:0.000px;color:#444444;">15</span>
<span class="t" style="left:3.65px;top:661.08px;font-size:16.5px;letter-spacing:0.000px;color:#444444;">16</span>
<span class="t" style="left:3.69px;top:685.08px;font-size:16.5px;letter-spacing:0.000px;color:#444444;">17</span>
<span class="t" style="left:3.65px;top:709.08px;font-size:16.5px;letter-spacing:0.000px;color:#444444;">18</span>
<span class="t" style="left:3.69px;top:733.08px;font-size:16.5px;letter-spacing:0.000px;color:#444444;">19</span>
<span class="t" style="left:3.82px;top:757.08px;font-size:16.5px;letter-spacing:0.000px;color:#444444;">20</span>
<span class="t" style="left:3.90px;top:781.08px;font-size:16.5px;letter-spacing:0.000px;color:#444444;">21</span>
<span class="t" style="left:3.90px;top:805.08px;font-size:16.5px;letter-spacing:0.000px;color:#444444;">22</span>
<div class="a" style="left:110px;top:317px;width:317px;height:365px;background:#f2f2f2;"></div>
<div class="a" style="left:428px;top:317px;width:79px;height:365px;background:#d9d9d9;"></div>
<div class="a" style="left:109px;top:393px;width:398px;height:1px;background:#000;"></div>
<div class="a" style="left:109px;top:417px;width:398px;height:1px;background:#000;"></div>
<div class="a" style="left:109px;top:441px;width:398px;height:1px;background:#000;"></div>
<div class="a" style="left:109px;top:465px;width:398px;height:1px;background:#000;"></div>
<div class="a" style="left:109px;top:489px;width:398px;height:1px;background:#000;"></div>
<div class="a" style="left:109px;top:513px;width:398px;height:1px;background:#000;"></div>
<div class="a" style="left:109px;top:537px;width:398px;height:1px;background:#000;"></div>
<div class="a" style="left:109px;top:561px;width:398px;height:1px;background:#000;"></div>
<div class="a" style="left:109px;top:585px;width:398px;height:1px;background:#000;"></div>
<div class="a" style="left:109px;top:609px;width:398px;height:1px;background:#000;"></div>
<div class="a" style="left:109px;top:633px;width:398px;height:1px;background:#000;"></div>
<div class="a" style="left:109px;top:657px;width:398px;height:1px;background:#000;"></div>
<div class="a" style="left:108px;top:315px;width:400px;height:2px;background:#000;"></div>
<div class="a" style="left:108px;top:368px;width:400px;height:2px;background:#000;"></div>
<div class="a" style="left:108px;top:681px;width:400px;height:2px;background:#000;"></div>
<div class="a" style="left:108px;top:315px;width:2px;height:368px;background:#000;"></div>
<div class="a" style="left:506px;top:315px;width:2px;height:368px;background:#000;"></div>
<div class="a" style="left:427px;top:315px;width:1px;height:368px;background:#000;"></div>
<span class="t" style="left:112.49px;top:294.37px;font-size:15.7px;letter-spacing:-0.371px;color:#000;font-weight:700;font-family:'DejaVu Sans','Liberation Sans',sans-serif;">Кузов і салон</span>
<span class="t" style="left:125.50px;top:335.07px;font-size:15.7px;letter-spacing:-0.399px;color:#000;font-weight:700;font-family:'DejaVu Sans','Liberation Sans',sans-serif;">Товар</span>
<span class="t" style="left:442.19px;top:321.77px;font-size:15.7px;letter-spacing:-0.390px;color:#000;font-weight:700;font-family:'DejaVu Sans','Liberation Sans',sans-serif;">Кіль-</span>
<span class="t" style="left:442.34px;top:347.87px;font-size:15.7px;letter-spacing:-0.767px;color:#000;font-weight:700;font-family:'DejaVu Sans','Liberation Sans',sans-serif;">кість</span>
<span class="t" style="left:123.92px;top:372.38px;font-size:14.5px;letter-spacing:-0.081px;color:#000;font-family:'DejaVu Sans','Liberation Sans',sans-serif;">Решітки радіатора</span>
<span class="t" style="left:476.32px;top:371.91px;font-size:15px;letter-spacing:-0.375px;color:#000;font-family:'DejaVu Sans','Liberation Sans',sans-serif;">123</span>
<span class="t" style="left:123.92px;top:396.38px;font-size:14.5px;letter-spacing:0.180px;color:#000;font-family:'DejaVu Sans','Liberation Sans',sans-serif;">Бампера передні</span>
<span class="t" style="left:485.30px;top:395.91px;font-size:15px;letter-spacing:-0.500px;color:#000;font-family:'DejaVu Sans','Liberation Sans',sans-serif;">74</span>
<span class="t" style="left:123.92px;top:420.38px;font-size:14.5px;letter-spacing:0.056px;color:#000;font-family:'DejaVu Sans','Liberation Sans',sans-serif;">Кронштейн бампера переднього</span>
<span class="t" style="left:485.82px;top:419.91px;font-size:15px;letter-spacing:-0.875px;color:#000;font-family:'DejaVu Sans','Liberation Sans',sans-serif;">46</span>
<span class="t" style="left:123.92px;top:444.38px;font-size:14.5px;letter-spacing:0.093px;color:#000;font-family:'DejaVu Sans','Liberation Sans',sans-serif;">Підсилювач бампера переднього</span>
<span class="t" style="left:485.38px;top:443.91px;font-size:15px;letter-spacing:-0.050px;color:#000;font-family:'DejaVu Sans','Liberation Sans',sans-serif;">35</span>
<span class="t" style="left:124.36px;top:468.38px;font-size:14.5px;letter-spacing:0.226px;color:#000;font-family:'DejaVu Sans','Liberation Sans',sans-serif;">Задній бампер</span>
<span class="t" style="left:485.30px;top:467.91px;font-size:15px;letter-spacing:-0.275px;color:#000;font-family:'DejaVu Sans','Liberation Sans',sans-serif;">70</span>
<span class="t" style="left:123.92px;top:492.38px;font-size:14.5px;letter-spacing:0.134px;color:#000;font-family:'DejaVu Sans','Liberation Sans',sans-serif;">Підсилювач бампера заднього</span>
<span class="t" style="left:484.93px;top:491.91px;font-size:15px;letter-spacing:0.025px;color:#000;font-family:'DejaVu Sans','Liberation Sans',sans-serif;">16</span>
<span class="t" style="left:123.92px;top:516.38px;font-size:14.5px;letter-spacing:0.118px;color:#000;font-family:'DejaVu Sans','Liberation Sans',sans-serif;">Кронштейн бампера заднього</span>
<span class="t" style="left:485.52px;top:515.91px;font-size:15px;letter-spacing:-0.125px;color:#000;font-family:'DejaVu Sans','Liberation Sans',sans-serif;">61</span>
<span class="t" style="left:124.50px;top:540.38px;font-size:14.5px;letter-spacing:0.010px;color:#000;font-family:'DejaVu Sans','Liberation Sans',sans-serif;">Фари, кріплення</span>
<span class="t" style="left:485.60px;top:539.91px;font-size:15px;letter-spacing:-0.575px;color:#000;font-family:'DejaVu Sans','Liberation Sans',sans-serif;">98</span>
<span class="t" style="left:124.36px;top:564.38px;font-size:14.5px;letter-spacing:-0.150px;color:#000;font-family:'DejaVu Sans','Liberation Sans',sans-serif;">Задні ліхтарі</span>
<span class="t" style="left:485.52px;top:563.91px;font-size:15px;letter-spacing:-0.350px;color:#000;font-family:'DejaVu Sans','Liberation Sans',sans-serif;">83</span>
<span class="t" style="left:123.92px;top:588.38px;font-size:14.5px;letter-spacing:0.053px;color:#000;font-family:'DejaVu Sans','Liberation Sans',sans-serif;">Молдинги, декоративні деталі кузова</span>
<span class="t" style="left:485.52px;top:587.91px;font-size:15px;letter-spacing:-0.500px;color:#000;font-family:'DejaVu Sans','Liberation Sans',sans-serif;">80</span>
<span class="t" style="left:124.65px;top:612.38px;font-size:14.5px;letter-spacing:0.095px;color:#000;font-family:'DejaVu Sans','Liberation Sans',sans-serif;">Дзеркало заднього виду</span>
<span class="t" style="left:484.93px;top:611.91px;font-size:15px;letter-spacing:0.550px;color:#000;font-family:'DejaVu Sans','Liberation Sans',sans-serif;">12</span>
<span class="t" style="left:123.92px;top:636.38px;font-size:14.5px;letter-spacing:0.228px;color:#000;font-family:'DejaVu Sans','Liberation Sans',sans-serif;">Крило переднє</span>
<span class="t" style="left:485.30px;top:635.91px;font-size:15px;letter-spacing:0.175px;color:#000;font-family:'DejaVu Sans','Liberation Sans',sans-serif;">72</span>
<span class="t" style="left:123.92px;top:661.38px;font-size:14.5px;letter-spacing:-0.131px;color:#000;font-family:'DejaVu Sans','Liberation Sans',sans-serif;">Капот</span>
<span class="t" style="left:485.82px;top:660.91px;font-size:15px;letter-spacing:-0.875px;color:#000;font-family:'DejaVu Sans','Liberation Sans',sans-serif;">46</span>
<div class="a" style="left:1416px;top:241px;width:23px;height:581px;background:#fff;"></div>
<div class="a" style="left:1419px;top:263px;width:19px;height:514px;background:#fff;border:1px solid #ababab;box-sizing:border-box;"></div>
<div class="a" style="left:1419px;top:777px;width:19px;height:26px;background:#f0f0f0;"></div>
<div class="a" style="left:1419px;top:244px;width:19px;height:19px;background:#fff;border:1px solid #c8c8c8;box-sizing:border-box;"></div>
<div class="a" style="left:1419px;top:803px;width:19px;height:19px;background:#fff;border:1px solid #c8c8c8;box-sizing:border-box;"></div>
<svg class="a" style="left:1423.5px;top:250.5px;" width="10" height="5.4" viewBox="0 0 10 5.4"><path d="M0 5.4L5 0L10 5.4Z" fill="#777"/></svg>
<svg class="a" style="left:1423.5px;top:810px;" width="10" height="5.4" viewBox="0 0 10 5.4"><path d="M0 0L5 5.4L10 0Z" fill="#777"/></svg>
<div class="a" style="left:0px;top:822px;width:847px;height:28px;background:#f3f3f3;"></div>
<div class="a" style="left:847px;top:822px;width:592px;height:28px;background:#ffffff;"></div>
<div class="a" style="left:99px;top:822px;width:44px;height:25px;background:#fff;border-left:1px solid #c6c6c6;border-right:1px solid #c6c6c6;box-sizing:border-box;"></div>
<div class="a" style="left:99px;top:845px;width:44px;height:2px;background:#217346;"></div>
<div class="a" style="left:100px;top:821px;width:42px;height:1px;background:#fff;"></div>
<span class="t" style="left:110.73px;top:822.12px;font-size:16.4px;letter-spacing:1.480px;color:#217346;font-weight:700;">01</span>
<svg class="a" style="left:23px;top:831px;" width="7" height="9" viewBox="0 0 7 9"><path d="M6.4 0L0.4 4.3L6.4 8.6Z" fill="#c2c2c2"/></svg>
<svg class="a" style="left:52px;top:831px;" width="7" height="9" viewBox="0 0 7 9"><path d="M0.6 0L6.6 4.3L0.6 8.6Z" fill="#c2c2c2"/></svg>
<svg class="a" style="left:175px;top:825px;" width="22" height="22" viewBox="0 0 22 22"><circle cx="11" cy="10.7" r="9.3" fill="none" stroke="#6a6a6a" stroke-width="1.1"/><path d="M11 5.4V16M5.7 10.7H16.3" stroke="#6a6a6a" stroke-width="1.6"/></svg>
<div class="a" style="left:878px;top:826px;width:19px;height:19px;background:#fff;border:1px solid #c8c8c8;box-sizing:border-box;"></div>
<div class="a" style="left:1399px;top:826px;width:19px;height:19px;background:#fff;border:1px solid #c8c8c8;box-sizing:border-box;"></div>
<div class="a" style="left:897px;top:826px;width:464px;height:19px;background:#fff;border:1px solid #ababab;box-sizing:border-box;"></div>
<div class="a" style="left:1361px;top:826px;width:37px;height:19px;background:#e8e8e8;"></div>
<svg class="a" style="left:884.5px;top:830.5px;" width="5.4" height="10" viewBox="0 0 5.4 10"><path d="M5.4 0L0 5L5.4 10Z" fill="#777"/></svg>
<svg class="a" style="left:1406px;top:830.5px;" width="5.4" height="10" viewBox="0 0 5.4 10"><path d="M0 0L5.4 5L0 10Z" fill="#777"/></svg>
<div class="a" style="left:860px;top:829px;width:3px;height:3px;background:#a0a0a0;"></div>
<div class="a" style="left:860px;top:834px;width:3px;height:3px;background:#a0a0a0;"></div>
<div class="a" style="left:860px;top:839px;width:3px;height:3px;background:#a0a0a0;"></div>
<div class="a" style="left:0px;top:850px;width:1439px;height:24px;background:#217346;"></div>
<div class="a" style="left:1087px;top:850px;width:42px;height:24px;background:#1a6038;"></div>
<span class="t" style="left:2.50px;top:853.67px;font-size:12.5px;letter-spacing:0.828px;color:#fff;">Готово</span>
<span class="t" style="left:1382.76px;top:853.67px;font-size:12.5px;letter-spacing:-0.016px;color:#fff;">100 %</span>
<svg class="a" style="left:1100px;top:856px;" width="17" height="16" viewBox="0 0 17 16"><path d="M0.6 0.6H15.6V15.2H0.6ZM5.6 0.6V15.2M10.6 0.6V15.2M0.6 5.5H15.6M0.6 10.4H15.6" fill="none" stroke="#fff" stroke-width="1.1"/></svg>
<svg class="a" style="left:1141px;top:856px;" width="18" height="16" viewBox="0 0 18 16"><rect x="0.6" y="0.6" width="15.8" height="14.6" fill="none" stroke="#fff" stroke-width="1.1"/><rect x="4.6" y="2.8" width="7.8" height="10.2" fill="none" stroke="#fff" stroke-width="1"/><path d="M6.4 5.6H10.6M6.4 7.9H10.6M6.4 10.2H10.6" stroke="#fff" stroke-width="1"/></svg>
<svg class="a" style="left:1183px;top:856px;" width="18" height="16" viewBox="0 0 18 16"><rect x="0.6" y="0.6" width="15.8" height="14.6" fill="none" stroke="#fff" stroke-width="1.1"/><path d="M1 1H5.2V9.4H1ZM6.6 1H10.6V9.4H6.6Z" fill="#eee"/><path d="M5.9 0.6V10M10.9 0.6V10H1" fill="none" stroke="#fff" stroke-width="0.8"/></svg>
<svg class="a" style="left:1218px;top:862px;" width="10" height="2" viewBox="0 0 10 2"><rect width="10" height="1.8" fill="#fff"/></svg>
<svg class="a" style="left:1232px;top:864px;" width="125" height="1" viewBox="0 0 125 1"><rect width="125" height="1" fill="#fff"/></svg>
<svg class="a" style="left:1292px;top:857px;" width="6" height="14" viewBox="0 0 6 14"><rect width="6" height="14" fill="#fff"/></svg>
<svg class="a" style="left:1361px;top:858px;" width="10" height="11" viewBox="0 0 10 11"><path d="M5 0.4V10.4M0 5.4H10" stroke="#fff" stroke-width="1.8"/></svg>
</body></html>
